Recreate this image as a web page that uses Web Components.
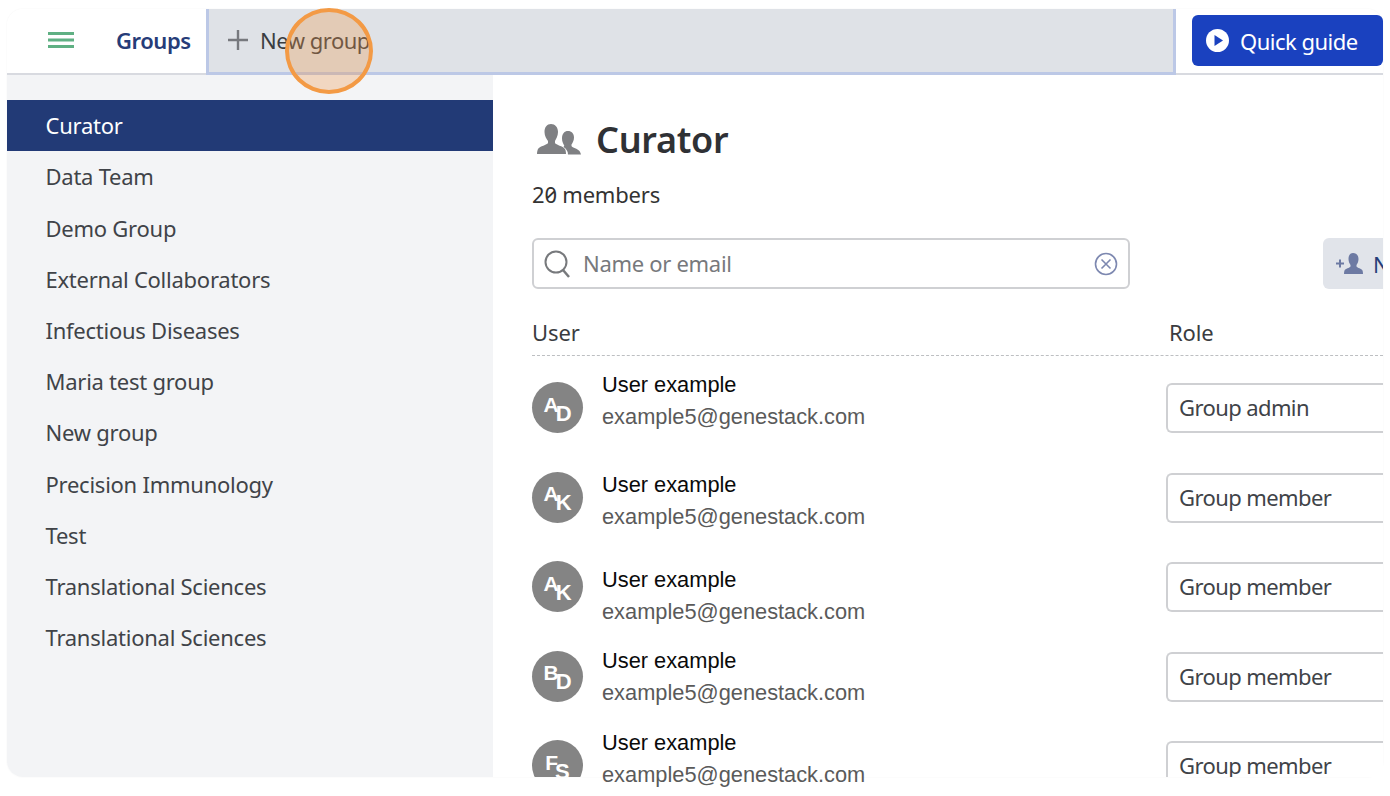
<!DOCTYPE html>
<html lang="en"><head><meta charset="utf-8"><title>Groups</title>
<style>
html,body{margin:0;height:100%;background:#fff;overflow:hidden}
body{padding:9px 7px 19px;box-sizing:border-box;font-family:"Noto Sans",sans-serif}
</style></head><body>
<app-window>
  <app-header></app-header>
  <group-list slot="side">
    <group-item active>Curator</group-item>
    <group-item>Data Team</group-item>
    <group-item>Demo Group</group-item>
    <group-item>External Collaborators</group-item>
    <group-item>Infectious Diseases</group-item>
    <group-item>Maria test group</group-item>
    <group-item>New group</group-item>
    <group-item>Precision Immunology</group-item>
    <group-item>Test</group-item>
    <group-item>Translational Sciences</group-item>
    <group-item>Translational Sciences</group-item>
  </group-list>
  <group-detail slot="main">
    <member-row a="A" b="D" role="Group admin" shift="0"></member-row>
    <member-row a="A" b="K" role="Group member" shift="10"></member-row>
    <member-row a="A" b="K" role="Group member" shift="16"></member-row>
    <member-row a="B" b="D" role="Group member" shift="7"></member-row>
    <member-row a="F" b="S" role="Group member" shift="0" cut></member-row>
  </group-detail>
</app-window>
<script>
const def=(n,html)=>customElements.define(n,class extends HTMLElement{
  connectedCallback(){ if(this.shadowRoot)return; const r=this.attachShadow({mode:'open'});
    r.innerHTML=typeof html==='function'?html(this):html; }
});
const FONT='"Noto Sans",sans-serif';
def('app-window',`<style>
:host{display:block;position:relative;height:768px;border-radius:16px;background:#fff;box-shadow:0 0 2px rgba(0,0,0,.05)}
.body{display:grid;grid-template-columns:486px 1fr;grid-template-rows:702px;height:702px}
</style><slot></slot><div class="body"><slot name="side"></slot><slot name="main"></slot></div>`);
def('app-header',`<style>
:host{display:flex;height:66px;box-sizing:border-box;background:#fff;border-bottom:2px solid #d8dae0;border-radius:16px 16px 0 0;font-family:${FONT}}
.menu{width:199px;display:flex;align-items:center;flex:none;box-sizing:border-box;padding-left:41px;padding-bottom:2px}
.title{margin-left:42px;font-size:22px;font-weight:600;color:#263c78;letter-spacing:-.45px}
.new{width:970px;flex:none;height:66px;box-sizing:border-box;background:#dfe2e7;border:solid #bcc8e6;border-width:0 3px 3px 3px;display:flex;align-items:center;padding-left:19px;padding-bottom:1px;font-size:22px;color:#3a3d42;letter-spacing:-.5px}
.new svg{margin-right:12px;flex:none}
.btn{margin:6px 0 0 16px;width:191px;height:51px;flex:none;background:#1a41bf;border-radius:6px;color:#fff;display:flex;align-items:center;box-sizing:border-box;padding-left:14px;font-size:22px;gap:11px;letter-spacing:-.5px}
.overlay{position:absolute;left:278px;top:-1px;width:88px;height:86px;box-sizing:border-box;border-radius:50%;border:4px solid #f39a45;background:rgba(240,150,70,.3)}
</style>
<div class="menu"><svg width="26" height="16" viewBox="0 0 26 16"><path d="M0 0h26v3H0zM0 6.500h26v3H0zM0 13h26v3H0z" fill="#5fb083"/></svg><span class="title">Groups</span></div>
<div class="new"><svg width="20" height="20" viewBox="0 0 20 20"><path d="M8.800 0h2.400v20H8.800zM0 8.800h20v2.400H0z" fill="#77797e"/></svg>New group</div>
<div class="btn"><svg width="23" height="23" viewBox="0 0 23 23"><circle cx="11.500" cy="11.500" r="11.500" fill="#fff"/><path d="M8.500 6v11l8.500-5.500z" fill="#1a41bf"/></svg>Quick guide</div>
<div class="overlay"></div>`);
def('group-list',`<style>
:host{display:block;background:#f3f4f6;padding-top:25px;border-radius:0 0 0 16px;font-family:${FONT}}
</style><slot></slot>`);
def('group-item',el=>`<style>
:host{display:flex;align-items:center;height:51.2px;box-sizing:border-box;padding:0 0 .6px 38.500px;font-size:22px;letter-spacing:-.25px;color:${el.hasAttribute('active')?'#fff':'#404348'};background:${el.hasAttribute('active')?'#223a76':'transparent'}}
</style><slot></slot>`);
def('group-detail',`<style>
:host{display:block;min-width:0;background:#fff;padding:0 0 0 39px;overflow-x:clip;overflow-y:visible;font-family:${FONT};color:#2f3135}
h1{margin:30px 0 0;padding-left:5px;display:flex;align-items:center;gap:15px;height:68px;font-size:36px;font-weight:600;letter-spacing:-.3px;color:#2f3135}
.count{font-size:22px;margin-top:6px;height:30px;line-height:30px;color:#333;letter-spacing:-.2px;font-feature-settings:"zero"}
.tools{display:flex;margin-top:29px;width:851px}
.search{width:598px;height:51px;box-sizing:border-box;border:2px solid #cfd0d3;border-radius:6px;display:flex;align-items:center;padding:0 10px 0 10px;font-size:22px;color:#77797c;gap:13px;flex:none;letter-spacing:-.3px}
.search span{flex:1;padding-bottom:2px}
.search svg{flex:none}
.add{margin-left:193px;width:120px;height:51px;flex:none;background:#e1e4ea;border-radius:6px;display:flex;align-items:center;padding-left:13px;box-sizing:border-box;gap:10px;color:#263c78;font-size:22px;white-space:nowrap}
.add svg{flex:none}
.head{display:grid;grid-template-columns:637px 220px;margin-top:28px;height:38px;font-size:22px;border-bottom:1px dashed #bdbfc2;width:851px;color:#3a3c40;line-height:30px;letter-spacing:-.1px}
</style>
<h1><svg width="44" height="32" viewBox="0 0 44 32"><path fill="#7f8083" d="M14 1c4 0 7 3 7 8 0 4-2 7-3 9v2c1 2 8 3 10 6 .7 1.200 1 3 1 5H0c0-2 .5-3.800 1-5 2-3 9-4 10-6v-2C9.500 16 7.500 13 7.500 9 7.500 4 10 1 14 1z"/><path fill="#7f8083" d="M31 8c3.500 0 6 2.600 6 6.500 0 3-1.500 5.500-2.500 7v1.500c1 1.800 6 2.500 8 5 .7 1 1.200 2.500 1.500 3.500H31c0-3-1.500-5.500-4.500-7.500l.8-1.500c-1-1.500-2.300-4-2.300-7C25 10.600 27.500 8 31 8z"/></svg>Curator</h1>
<div class="count">20 members</div>
<div class="tools"><div class="search"><svg width="26" height="28" viewBox="0 0 26 28"><circle cx="12" cy="12" r="10.500" fill="none" stroke="#77797c" stroke-width="2"/><path d="M19 20l6 7" stroke="#77797c" stroke-width="2.500"/></svg><span>Name or email</span><svg width="24" height="24" viewBox="0 0 24 24"><circle cx="12" cy="12" r="10.500" fill="none" stroke="#7d88b0" stroke-width="1.600"/><path d="M7.500 7.500l9 9M16.500 7.500l-9 9" stroke="#7d88b0" stroke-width="1.600"/></svg></div>
<div class="add"><svg width="27" height="21" viewBox="0 0 27 21"><path fill="#6d7aa3" d="M0 9.500h3v-3h2v3h3v2H5v3H3v-3H0zM17 0c3.500 0 5.500 2.700 5.500 6 0 2.500-1 4.500-2 6v1.500c1 1.500 5 2 6 4 .3.800.5 2 .5 3.500H8c0-1.500.2-2.700.5-3.500 1-2 5-2.500 6-4V12c-1-1.500-2-3.500-2-6 0-3.300 1.500-6 4.500-6z"/></svg>New user</div></div>
<div class="head"><span>User</span><span>Role</span></div>
<slot></slot>`);
def('member-row',el=>{const cut=el.hasAttribute('cut');return `<style>
:host{display:grid;grid-template-columns:70px 564px 260px;height:89.500px;width:900px;font-family:"Liberation Sans",Arial,sans-serif}
.cell{${cut?'height:63px;overflow:hidden;':''}}
.av{width:51px;height:51px;margin-top:26px;border-radius:50%;background:#848484;color:#fff;font-weight:700;display:flex;align-items:center;justify-content:center;line-height:1}
.av b{display:block;font-size:21px;margin-top:-7px}
.av b+b{font-size:22px;margin-top:12px;margin-left:-3px}
.tx{padding-top:${16+ +el.getAttribute('shift')}px}
.n{font-size:21.800px;color:#0a0a0a;line-height:26px}
.e{font-size:21.800px;color:#5a5a5a;line-height:26px;margin-top:6px;white-space:nowrap}
.sel{margin-top:27px;height:50px;box-sizing:border-box;border:2px solid #cfd0d3;border-right:0;border-radius:6px 0 0 6px;display:flex;align-items:center;padding:0 0 2px 11px;font:22px ${FONT};letter-spacing:-.6px;color:#404348}
</style>
<div class="cell"><div class="av"><b>${el.getAttribute('a')}</b><b>${el.getAttribute('b')}</b></div></div>
<div class="tx"><div class="n">User example</div><div class="e">example5@genestack.com</div></div>
<div class="cell"><div class="sel">${el.getAttribute('role')}</div></div>`});
</script>
</body></html>
